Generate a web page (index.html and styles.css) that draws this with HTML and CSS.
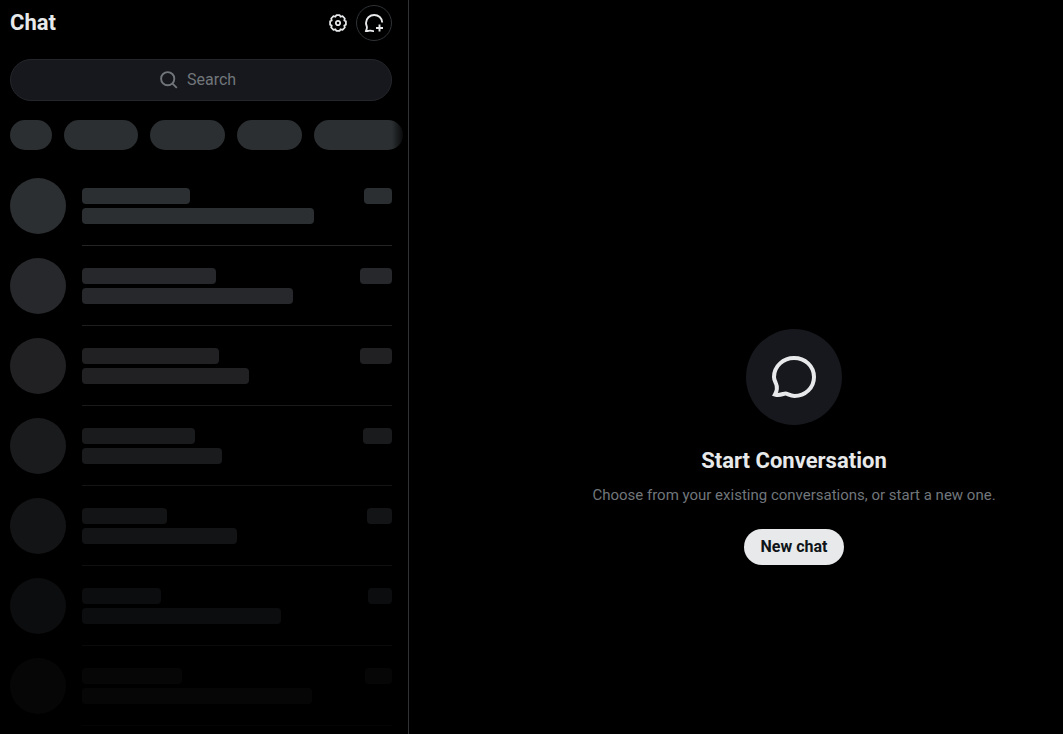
FILE: index.html
```html
<!DOCTYPE html>
<html lang="en">
<head>
<meta charset="utf-8">
<meta name="viewport" content="width=device-width, initial-scale=1">
<title>Chat</title>
<link rel="stylesheet" href="styles.css">
</head>
<body>
<div class="app">
  <aside class="sidebar">
    <header class="bar">
      <h1 class="title">Chat</h1>
      <button class="icon-button" type="button" aria-label="Settings">
        <svg width="20" height="20" viewBox="-12 -12 24 24" fill="none" stroke="currentColor" stroke-width="2.100" stroke-linejoin="round"><path d="M9.500-2V2L7.500 3.100L8.200 5.400L5.400 8.200L3.100 7.500L2 9.500H-2L-3.100 7.500L-5.400 8.200L-8.200 5.400L-7.500 3.100L-9.500 2V-2L-7.500-3.100L-8.200-5.400L-5.400-8.200L-3.100-7.500L-2-9.500H2L3.100-7.500L5.400-8.200L8.200-5.400L7.500-3.100z"/><circle r="2.600"/></svg>
      </button>
      <button class="icon-button outlined" type="button" aria-label="New message">
        <svg width="20" height="20" viewBox="0 0 20 20" fill="none" stroke="currentColor" stroke-width="1.900"><path d="M18.200 9.500C18 5 14.500 2 10.200 2S2 5.300 2 10C2 12.500 3.500 13.500 2.800 15.500L2 18C4 18.300 5 17.300 6.500 17.700Q8 18.200 10 18.100"/><path d="M15.500 11.500v7M12 15h7"/></svg>
      </button>
    </header>
    <label class="search">
      <svg width="20" height="20" viewBox="0 0 20 20" fill="none" stroke="currentColor" stroke-width="1.900"><circle cx="8.700" cy="8.700" r="6.600"/><path d="M13.300 13.300l4.500 4.500"/></svg>
      <input class="search-input" type="text" placeholder="Search" aria-label="Search">
    </label>
    <div class="pills">
      <span class="pill" style="width:42px"></span>
      <span class="pill" style="width:74px"></span>
      <span class="pill" style="width:75px"></span>
      <span class="pill" style="width:65px"></span>
      <span class="pill" style="width:89px"></span>
    </div>
    <ul class="list" aria-label="Loading conversations">
      <li class="row first"><span class="avatar"></span><div class="lines"><div class="line"><span class="bone" style="width:108px"></span><span class="bone" style="width:28px"></span></div><span class="bone" style="width:232px"></span></div></li>
      <li class="row" style="opacity:.86"><span class="avatar"></span><div class="lines"><div class="line"><span class="bone" style="width:134px"></span><span class="bone" style="width:32px"></span></div><span class="bone" style="width:211px"></span></div></li>
      <li class="row" style="opacity:.72"><span class="avatar"></span><div class="lines"><div class="line"><span class="bone" style="width:137px"></span><span class="bone" style="width:32px"></span></div><span class="bone" style="width:167px"></span></div></li>
      <li class="row" style="opacity:.58"><span class="avatar"></span><div class="lines"><div class="line"><span class="bone" style="width:113px"></span><span class="bone" style="width:29px"></span></div><span class="bone" style="width:140px"></span></div></li>
      <li class="row" style="opacity:.43"><span class="avatar"></span><div class="lines"><div class="line"><span class="bone" style="width:85px"></span><span class="bone" style="width:25px"></span></div><span class="bone" style="width:155px"></span></div></li>
      <li class="row" style="opacity:.28"><span class="avatar"></span><div class="lines"><div class="line"><span class="bone" style="width:79px"></span><span class="bone" style="width:24px"></span></div><span class="bone" style="width:199px"></span></div></li>
      <li class="row" style="opacity:.14"><span class="avatar"></span><div class="lines"><div class="line"><span class="bone" style="width:100px"></span><span class="bone" style="width:27px"></span></div><span class="bone" style="width:230px"></span></div></li>
    </ul>
  </aside>
  <main class="empty">
    <div class="badge">
      <svg width="48" height="48" viewBox="0 0 48 48" fill="none" stroke="currentColor" stroke-width="4" stroke-linejoin="miter"><path d="M24 5C35 5 44 13 44 24S35 43 24.500 43C20 43 17.500 40.500 15.500 40.500S10 43 5 41.500C7.500 37 7.500 34 6 30.500C5 28 4 26.500 4 24C4 13 13.500 5 24 5z"/></svg>
    </div>
    <h2 class="heading">Start Conversation</h2>
    <p class="text">Choose from your existing conversations, or start a new one.</p>
    <button class="primary" type="button">New chat</button>
  </main>
</div>
</body>
</html>
```
FILE: styles.css
```css
* { box-sizing: border-box; }
body {
  margin: 0;
  background: #000;
  color: #e7e9ea;
  font-family: Roboto, "Liberation Sans", sans-serif;
  font-size: 16px;
  line-height: 20px;
}
button, input { font: inherit; }
.app {
  display: grid;
  grid-template-columns: 409px 1fr;
  height: 100vh;
  overflow: hidden;
}
.sidebar {
  border-right: 1px solid #2f3336;
  padding: 0 16px 0 10px;
  overflow: hidden;
}
.bar {
  display: flex;
  align-items: center;
  gap: 8px;
  height: 46px;
}
.title {
  flex: 1;
  margin: 0;
  font-size: 22px;
  line-height: 24px;
  font-weight: 700;
}
.icon-button {
  display: flex;
  align-items: center;
  justify-content: center;
  padding: 0;
  border: 0;
  background: none;
  color: #e7e9ea;
}
.outlined {
  width: 36px;
  height: 36px;
  border: 1px solid #2f3336;
  border-radius: 50%;
}
.search {
  display: flex;
  align-items: center;
  justify-content: center;
  gap: 8px;
  height: 42px;
  margin-top: 13px;
  border: 1px solid #24262b;
  border-radius: 21px;
  background: #17181d;
  color: #71767b;
}
.search-input {
  width: 56px;
  padding: 0;
  border: 0;
  outline: 0;
  background: none;
  color: #e7e9ea;
}
.search-input::placeholder { color: #71767b; opacity: 1; }
.pills {
  display: flex;
  gap: 12px;
  margin: 19px -16px 16px 0;
  -webkit-mask-image: linear-gradient(to left, transparent 2px, #000 16px);
  mask-image: linear-gradient(to left, transparent 2px, #000 16px);
}
.pill {
  flex: none;
  height: 30px;
  border-radius: 15px;
  background: #2b2f31;
}
.list { margin: 0; padding: 0; list-style: none; }
.row { display: flex; gap: 16px; height: 80px; }
.avatar {
  flex: none;
  width: 56px;
  height: 56px;
  margin-top: 12px;
  border-radius: 50%;
  background: #2e2f33;
}
.lines {
  flex: 1;
  display: flex;
  flex-direction: column;
  gap: 4px;
  padding-top: 22px;
  border-bottom: 1px solid #222426;
}
.line { display: flex; justify-content: space-between; }
.bone {
  height: 16px;
  border-radius: 4px;
  background: #2e2f33;
}
.first .avatar, .first .bone { background: #2b2f31; }
.empty {
  display: flex;
  flex-direction: column;
  align-items: center;
  justify-content: center;
  padding: 160px 0 0 116px;
}
.badge {
  display: flex;
  align-items: center;
  justify-content: center;
  width: 96px;
  height: 96px;
  border-radius: 50%;
  background: #17181d;
}
.heading {
  margin: 24px 0 12px;
  font-size: 22px;
  line-height: 24px;
  font-weight: 700;
}
.text { margin: 0 0 24px; font-size: 15px; color: #71767b; white-space: nowrap; }
.primary {
  height: 36px;
  padding: 0 17px;
  border: 0;
  border-radius: 18px;
  background: #e7e9ea;
  color: #0f1419;
  font-weight: 700;
}
```
